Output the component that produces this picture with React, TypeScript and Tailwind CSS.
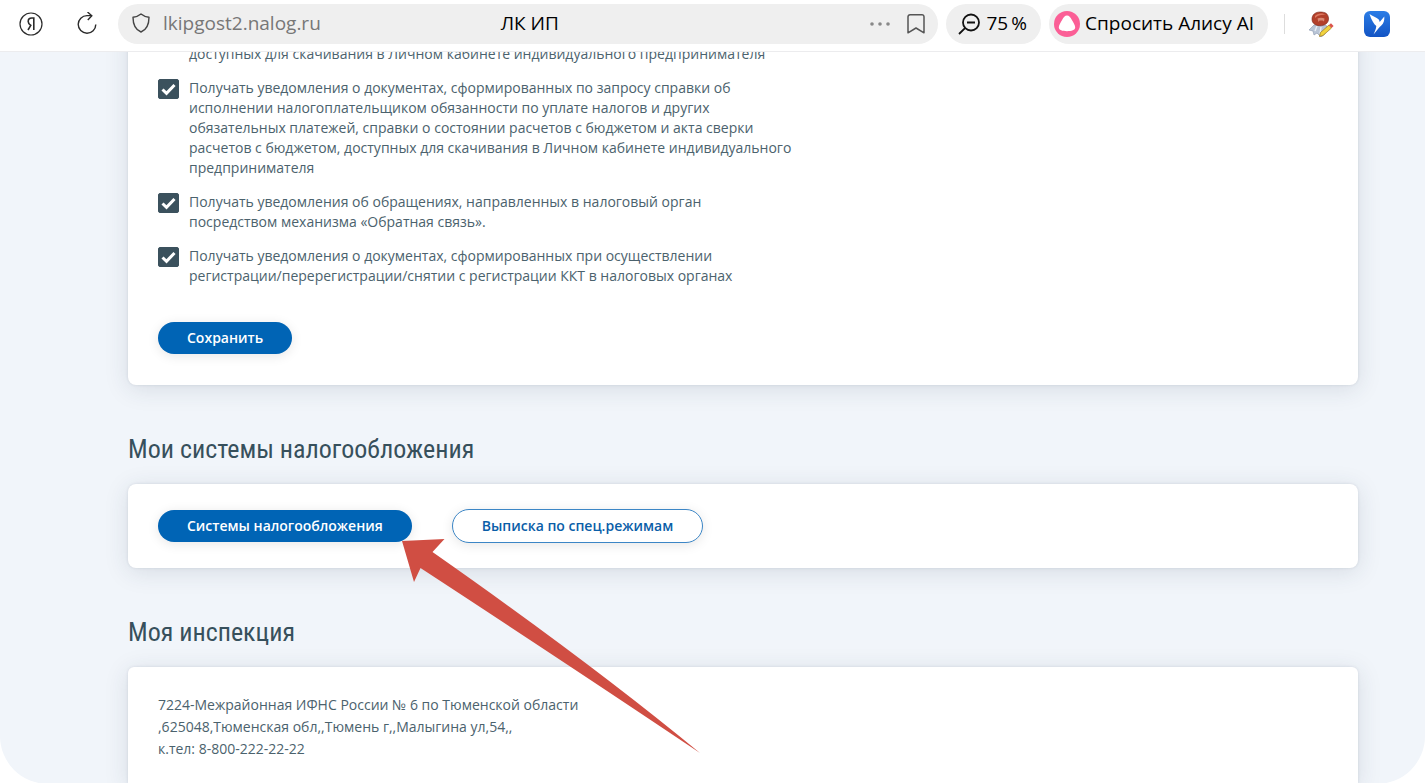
import type { ReactNode } from "react";

const notices = [
  {
    id: "documents",
    lines: ["доступных для скачивания в Личном кабинете индивидуального предпринимателя"],
    hidden: true,
  },
  {
    id: "references",
    lines: [
      "Получать уведомления о документах, сформированных по запросу справки об",
      "исполнении налогоплательщиком обязанности по уплате налогов и других",
      "обязательных платежей, справки о состоянии расчетов с бюджетом и акта сверки",
      "расчетов с бюджетом, доступных для скачивания в Личном кабинете индивидуального",
      "предпринимателя",
    ],
  },
  {
    id: "appeals",
    lines: [
      "Получать уведомления об обращениях, направленных в налоговый орган",
      "посредством механизма «Обратная связь».",
    ],
  },
  {
    id: "kkt",
    lines: [
      "Получать уведомления о документах, сформированных при осуществлении",
      "регистрации/перерегистрации/снятии с регистрации ККТ в налоговых органах",
    ],
  },
];

const cardShadow = "shadow-[0_4px_24px_rgba(40,55,80,0.13),0_0_3px_rgba(40,55,80,0.12)]";

function Toolbar() {
  return (
    <header className="relative z-10 flex h-[52px] shrink-0 items-center border-b border-[#ececee] bg-white pb-1 pr-[35px] text-[19px] text-black">
      <button type="button" aria-label="Яндекс" className="ml-[19px]">
        <svg className="size-6" viewBox="0 0 24 24" fill="none" stroke="#2b2b2b" strokeWidth="1.2">
          <circle cx="12" cy="12" r="11" />
          <path d="M14.800 18V6h-2c-2.300 0-3.600 1.300-3.600 3.400 0 1.800.9 2.800 2.600 3.900L9 18" strokeWidth="1.6" />
        </svg>
      </button>
      <button type="button" aria-label="Обновить" className="ml-8">
        <svg className="size-6" viewBox="0 0 24 24" fill="none" stroke="#2b2b2b" strokeWidth="1.4">
          <path d="M20.800 12.500a8.800 8.800 0 1 1-8.800-8.900h4.500" />
          <path d="M12.500 0l4.300 3.700L12.800 8" />
        </svg>
      </button>
      <div className="ml-[19px] grid h-10 min-w-0 flex-1 grid-cols-[1fr_auto_1fr] items-center rounded-full bg-[#efefef] pl-[14px] pr-[11px]">
        <span className="flex items-center gap-[13px]">
          <svg className="h-5 w-[18px] shrink-0" viewBox="0 0 18 20" fill="none" stroke="#444" strokeWidth="1.4">
            <path d="M9 1C6.800 2.800 4.400 3.900 1 4.200 1 11.500 3 16.500 9 19c6-2.500 8-7.500 8-14.800C13.600 3.900 11.200 2.800 9 1z" strokeLinejoin="round" />
          </svg>
          <span className="text-[#777]">lkipgost2.nalog.ru</span>
        </span>
        <span>ЛК ИП</span>
        <span className="flex items-center justify-end gap-[15px]">
          <button type="button" aria-label="Ещё">
            <svg className="h-6 w-5" viewBox="0 0 20 24" fill="#888">
              <circle cx="2" cy="12" r="1.800" />
              <circle cx="10" cy="12" r="1.800" />
              <circle cx="18" cy="12" r="1.800" />
            </svg>
          </button>
          <button type="button" aria-label="Закладка">
            <svg className="h-5 w-[22px]" viewBox="0 0 22 20" fill="none" stroke="#555" strokeWidth="1.5">
              <path d="M3 18.800V2.800A2 2 0 0 1 5 .8h12a2 2 0 0 1 2 2v16L11 14z" strokeLinejoin="round" />
            </svg>
          </button>
        </span>
      </div>
      <button type="button" className="ml-2 flex h-10 items-center gap-1.5 rounded-full bg-[#efefef] pl-3 pr-[14px]">
        <svg className="h-6 w-[22px]" viewBox="0 0 22 24" fill="none" stroke="#111" strokeWidth="1.800">
          <circle cx="13" cy="10.500" r="8" />
          <path d="M9 10.500h8M7 16.200L1 22" />
        </svg>
        75{"\u2009"}%
      </button>
      <button type="button" className="ml-2 flex h-10 items-center gap-[5px] rounded-full bg-[#efefef] pl-[5px] pr-[14px]">
        <svg className="size-[26px]" viewBox="0 0 26 26">
          <circle cx="13" cy="13" r="13" fill="#fb5f96" />
          <path d="M13 4.500c2.200 0 3.300 1.600 4.900 4.400 1.600 2.700 3.300 5.300 3.300 7.400 0 3-3.600 3.900-8.200 3.900s-8.200-.9-8.200-3.900c0-2.100 1.700-4.700 3.300-7.400C9.700 6.100 10.800 4.500 13 4.500z" fill="#fff" />
        </svg>
        Спросить Алису AI
      </button>
      <span className="ml-4 h-5 w-px bg-[#ddd]" />
      <button type="button" aria-label="Расширение" className="ml-[23px]">
        <svg className="size-[26px]" viewBox="0 0 26 26">
          <path d="M6 14l-5 5 4 1 1 4 3-2 4 4 4-3 2-8-6-2z" fill="#b9c5d6" stroke="#8796ad" strokeWidth=".6" />
          <path d="M9 15l-2 5M13 16l-1 7" stroke="#e7edf5" strokeWidth="1.4" />
          <path d="M4 8c0-4 3-7 8-7 6 0 8 2 8.500 6 .5 3-1.500 6-4.500 7-3 1.200-7 .8-9-.5C4.500 12 4 10 4 8z" fill="#b2402b" stroke="#78271b" strokeWidth=".6" />
          <path d="M7 5c2-3 8-3.500 11-1-4-.5-8 0-11 3z" fill="#dd7961" />
          <path d="M9.500 7.500c2-1 5-1 7 0l-.5 3-1.500-1h-3l-1 1.500z" fill="#d98a75" />
          <path d="M12.500 21.500l8.500-7.500 2.500 3-8.500 7.500-3.500 1z" fill="#f1d33d" stroke="#9b7720" strokeWidth=".7" />
          <path d="M21 14l2-1.800 2.600 2.800-2.100 2z" fill="#db544d" />
        </svg>
      </button>
      <button type="button" aria-label="Птица" className="ml-[30px]">
        <svg className="size-[26px]" viewBox="0 0 26 26">
          <defs>
            <linearGradient id="bird-tile" x1="0" y1="0" x2="0" y2="1">
              <stop offset="0" stopColor="#2b7de6" />
              <stop offset="1" stopColor="#1254c4" />
            </linearGradient>
          </defs>
          <rect width="26" height="26" rx="6" fill="url(#bird-tile)" />
          <path d="M5.500 3C8.500 5.500 12.500 6.200 14.500 8.300c.8.900 1 1.800 1.200 2.700L20.300 5.500c.3 3.500-.5 7-3 9-1 .9-1.800 1.500-2.500 2.500L9.500 23.500c1.200-2.800 2.600-5.600 2.800-8.500C9.800 13 7.500 9 5.500 3z" fill="#fff" />
        </svg>
      </button>
    </header>
  );
}

function Notice({ id, lines, hidden }: { id: string; lines: string[]; hidden?: boolean }) {
  return (
    <div className="flex items-start gap-[10px]">
      <span className="grid w-[21px] shrink-0 pt-px">
        {!hidden && (
          <>
            <input
              id={id}
              type="checkbox"
              defaultChecked
              className="peer col-start-1 row-start-1 h-5 w-[21px] appearance-none rounded-xs border border-[#3b515d] bg-white checked:bg-[#3b515d]"
            />
            <svg
              className="pointer-events-none invisible col-start-1 row-start-1 h-5 w-[21px] peer-checked:visible"
              viewBox="0 0 21 20"
              fill="none"
              stroke="#fff"
              strokeWidth="3"
            >
              <path d="M4.500 10.500l4 3.800L16.500 6" />
            </svg>
          </>
        )}
      </span>
      <label htmlFor={hidden ? undefined : id}>
        {lines.map((line) => (
          <span key={line} className="block">
            {line}
          </span>
        ))}
      </label>
    </div>
  );
}

function Heading({ children }: { children: ReactNode }) {
  return (
    <h2 className="font-['Roboto_Condensed',sans-serif] text-[26px] leading-8 text-[#37505c]">{children}</h2>
  );
}

export default function App() {
  return (
    <div className="flex min-h-screen flex-col overflow-hidden bg-white font-['Open_Sans',sans-serif] text-sm text-[#4b626d]">
      <Toolbar />
      <main className="-mt-6 flex flex-1 flex-col overflow-hidden rounded-b-[48px] bg-[#f1f5fa] pl-32 pr-[67px]">
        <section className={`rounded-b-lg bg-white px-[30px] pb-[31px] pt-4 ${cardShadow}`}>
          <form onSubmit={(event) => event.preventDefault()}>
            <div className="flex flex-col gap-[14px] leading-5">
              {notices.map((notice) => (
                <Notice key={notice.id} {...notice} />
              ))}
            </div>
            <button type="submit" className="mt-9 h-8 rounded-full bg-[#0064b5] px-[29px] font-semibold text-white shadow-[0_2px_12px_rgba(0,0,0,0.1)]">
              Сохранить
            </button>
          </form>
        </section>

        <section className="pt-12">
          <Heading>Мои системы налогообложения</Heading>
          <div className={`mt-[19px] flex items-center gap-10 rounded-lg bg-white px-[30px] py-[25px] ${cardShadow}`}>
            <button type="button" className="h-8 rounded-full bg-[#0064b5] px-[29px] font-semibold text-white shadow-[0_2px_12px_rgba(0,0,0,0.1)]">
              Системы налогообложения
            </button>
            <div className="relative">
              <button type="button" className="h-[34px] rounded-full border border-[#3c86c6] bg-white px-[29px] font-semibold text-[#0a5ea8] shadow-[0_2px_12px_rgba(0,0,0,0.1)]">
                Выписка по спец.режимам
              </button>
              <svg className="pointer-events-none absolute -left-[51px] top-[29px] z-10 h-[216px] w-[300px]" viewBox="0 0 300 216" fill="#d04e43">
                <path d="M1 3L43.500 1 31.500 14Q190 125 299 215Q180 135 19.500 30L13 44z" />
              </svg>
            </div>
          </div>
        </section>

        <section className="flex flex-1 flex-col pt-12">
          <Heading>Моя инспекция</Heading>
          <address className={`mt-[19px] flex-1 rounded-t-md bg-white px-[30px] pb-6 pt-[27px] not-italic leading-[22px] ${cardShadow}`}>
            <p>7224-Межрайонная ИФНС России № 6 по Тюменской области</p>
            <p>,625048,Тюменская обл,,Тюмень г,,Малыгина ул,54,,</p>
            <p>к.тел: 8-800-222-22-22</p>
          </address>
        </section>
      </main>
    </div>
  );
}
